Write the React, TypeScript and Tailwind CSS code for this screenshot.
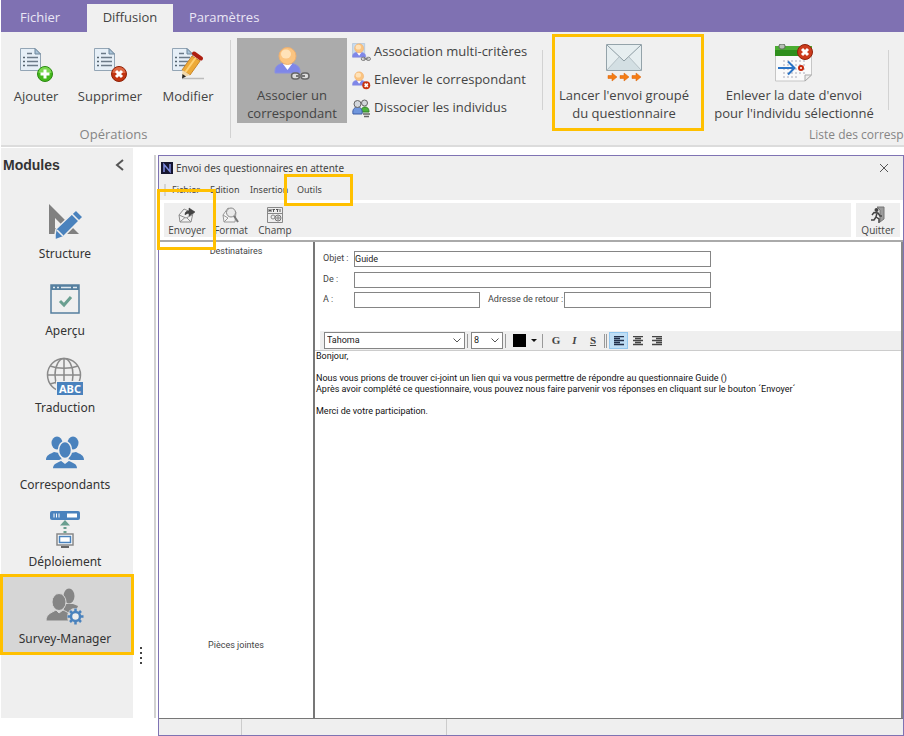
import { ReactNode } from "react";

type Kind = "add" | "remove" | "edit";

function DocumentIcon({ kind }: { kind: Kind }) {
  return (
    <svg width="36" height="36" viewBox="0 0 36 36" fill="none">
      <path d="M2.500 1.500H17L22.500 7V23.500H2.500Z" fill="#e6eff7" stroke="#93a5b5" />
      <path d="M17 1.500V7H22.500Z" fill="#a9c3d8" stroke="#6f879b" />
      <path d="M9 6.500H14M9 10.500H20M9 14.500H20M9 18.500H20" stroke="#6b7a88" strokeWidth="1.500" />
      <path d="M5 10.500H7M5 14.500H7M5 18.500H7" stroke="#56646f" strokeWidth="1.500" />
      {kind === "add" && (
        <g>
          <circle cx="27" cy="27" r="7.500" fill="#45b81c" stroke="#2b8a12" />
          <path d="M20.500 26a6.500 6 0 0 1 13 0Z" fill="#7bd750" />
          <path d="M27 22.500V31.500M22.500 27H31.500" stroke="#fff" strokeWidth="3" />
        </g>
      )}
      {kind === "remove" && (
        <g>
          <circle cx="27" cy="27" r="7.500" fill="#c23410" stroke="#8d2208" />
          <path d="M20.500 26a6.500 6 0 0 1 13 0Z" fill="#dd6743" />
          <path d="M24 24L30 30M30 24L24 30" stroke="#fff" strokeWidth="3" />
        </g>
      )}
      {kind === "edit" && (
        <g>
          <path d="M12 31.500H34" stroke="#bcbcbc" strokeWidth="1.500" />
          <path d="M22 9L30 14L20 28L12 23Z" fill="#edaa38" stroke="#ca872a" />
          <path d="M25.500 11L15.500 25" stroke="#ffd173" strokeWidth="2" />
          <path d="M12.500 23L20 28L12 31Z" fill="#f2d8aa" />
          <path d="M12.500 27L16 29.500L12 31.500Z" fill="#222" />
          <path d="M24 6.500L31 11.500" stroke="#ad1e10" strokeWidth="4" strokeLinecap="round" />
        </g>
      )}
    </svg>
  );
}

function PersonIcon({ size, kind }: { size: number; kind: "link" | "card" | "remove" }) {
  return (
    <svg width={size} height={size} viewBox="0 0 36 36" fill="none">
      {kind === "card" && <path d="M1 1H24V26H1Z" fill="#c9dcee" stroke="#9db7cf" />}
      <path d="M1 25C1 19 7 17 13 17S26 19 26 25V27H1Z" fill="#7f87e8" stroke="#8a90e0" />
      <path d="M9 18L13.500 24L18 18Z" fill="#fff" />
      <circle cx="13.500" cy="10" r="8.500" fill="#fbc480" stroke="#eeb070" />
      <ellipse cx="12" cy="8" rx="5" ry="4.500" fill="#ffe2b8" />
      {kind === "remove" ? (
        <g>
          <circle cx="27" cy="27" r="7.500" fill="#c8320f" />
          <path d="M24 24L30 30M30 24L24 30" stroke="#fff" strokeWidth="3" />
        </g>
      ) : (
        <g>
          <rect x="17.500" y="27" width="8" height="6" rx="3" fill="#ddd" stroke="#666" strokeWidth="1.500" />
          <rect x="27" y="27" width="8" height="6" rx="3" fill="#ddd" stroke="#666" strokeWidth="1.500" />
          <path d="M22 30H31" stroke="#777" strokeWidth="2" />
        </g>
      )}
    </svg>
  );
}

function PeopleIcon() {
  return (
    <svg width="19" height="19" viewBox="0 0 19 19" fill="none">
      <path d="M9 13C9 9 11 8 13 8S17 9 17 13Z" fill="#4cb43a" stroke="#317d28" />
      <circle cx="12.500" cy="4" r="3" fill="#d3d7dc" stroke="#666" />
      <path d="M1 15C0 10 3 8 5.500 8S11 10 10 15Z" fill="#6f96dd" stroke="#3d5da4" />
      <circle cx="5.500" cy="5" r="3.500" fill="#d3d7dc" stroke="#666" />
      <path d="M11 15H18M12 17.500H17" stroke="#666" strokeWidth="1.500" />
    </svg>
  );
}

function MailIcon() {
  return (
    <svg width="36" height="38" viewBox="0 0 36 38" fill="none">
      <path d="M.5.500H35.500V26.500H.5Z" fill="#e6eef0" stroke="#94a3aa" />
      <path d="M1 26L13 13L18 17L23 13L35 26Z" fill="#d3dfe3" />
      <path d="M1 1L18 17L35 1" stroke="#8d9ca3" />
      <path d="M1 26L13 13M35 26L23 13" stroke="#b5c1c6" />
      <path
        d="M2 31.500H6V29L11 33L6 37V34.500H2ZM14 31.500H18V29L23 33L18 37V34.500H14ZM26 31.500H30V29L35 33L30 37V34.500H26Z"
        fill="#f47c14"
        stroke="#dd6206"
        strokeWidth=".5"
      />
    </svg>
  );
}

function CalendarIcon() {
  return (
    <svg width="40" height="38" viewBox="0 0 40 38" fill="none">
      <path d="M1.500 3H37.500V31L31 37H1.500Z" fill="#fafafa" stroke="#c6c6c6" />
      <path d="M1 2H38V12H1Z" fill="#2f8f1d" />
      <path d="M1 2H38V6H1Z" fill="#4bad32" />
      <rect x="5" y="0" width="6" height="5" rx="2" fill="#b6beb4" stroke="#5b6a58" />
      <path d="M9 17H31M9 21H31M9 25H31M9 29H31M9 33H24" stroke="#d2d2da" strokeWidth="2" strokeDasharray="2 2" />
      <path d="M4 24H20M14 17.500L20.500 24L14 30.500" stroke="#2b74c6" strokeWidth="2" />
      <circle cx="27" cy="24" r="2" fill="#fff" stroke="#c8280c" strokeWidth="2" />
      <path d="M31 37V31H37.500Z" fill="#eee" stroke="#aaa" />
      <circle cx="31" cy="8" r="7.500" fill="#cc3b1c" stroke="#8f220b" />
      <path d="M28 5L34 11M34 5L28 11" stroke="#fff" strokeWidth="3" />
    </svg>
  );
}

function StructureIcon() {
  return (
    <svg width="40" height="38" viewBox="0 0 40 38">
      <path d="M4 1L34 31H4ZM10 15V25H20Z" fill="#808080" fillRule="evenodd" />
      <path d="M10 32L11 26L31 7L38 14L18 34L10 37Z" fill="#4a82bd" stroke="#efefef" strokeWidth="1.500" />
      <path d="M27 11L34 18M12 27L18 33" stroke="#efefef" strokeWidth="1.500" />
    </svg>
  );
}

function PreviewIcon() {
  return (
    <svg width="30" height="30" viewBox="0 0 30 30" fill="none">
      <path d="M1 1H29V29H1Z" stroke="#557f9f" strokeWidth="1.500" />
      <path d="M1 1H29V6H1Z" fill="#557f9f" />
      <path d="M3 3.500H5M7 3.500H9M11 3.500H21M23 3.500H27" stroke="#dfe8ef" strokeWidth="1.500" />
      <path d="M10 17L14 21L21 13" stroke="#6a9f90" strokeWidth="3" />
    </svg>
  );
}

function TranslationIcon() {
  return (
    <svg width="40" height="40" viewBox="0 0 40 40" fill="none">
      <g stroke="#8a8a8a" strokeWidth="1.500">
        <circle cx="19" cy="19" r="16.500" />
        <ellipse cx="19" cy="19" rx="9" ry="16.500" />
        <path d="M19 2V36M2.500 19H35.500M5 10C13 13 25 13 33 10M5 28C13 25 25 25 33 28" />
      </g>
      <rect x="11" y="25" width="28" height="15" fill="#efefef" />
      <rect x="12" y="26" width="26" height="13" fill="#4a82bd" />
      <text x="25" y="37" textAnchor="middle" fill="#fff" fontSize="11" fontWeight="700" fontFamily="Noto Sans, sans-serif">
        ABC
      </text>
    </svg>
  );
}

function CorrespondentsIcon() {
  return (
    <svg width="40" height="34" viewBox="0 0 40 34" fill="#4a82bd">
      <ellipse cx="12" cy="7" rx="5.500" ry="6.500" />
      <ellipse cx="28" cy="7" rx="5.500" ry="6.500" />
      <path d="M1 24C1 19 5 18 9 16L14 17L17 24ZM39 24C39 19 35 18 31 16L26 17L23 24Z" />
      <g stroke="#efefef" strokeWidth="1.500">
        <ellipse cx="20" cy="14" rx="6.500" ry="8.500" />
        <path d="M7 33C7 27 12 26 16 24L20 27L24 24C28 26 33 27 33 33Z" />
      </g>
    </svg>
  );
}

function DeploymentIcon() {
  return (
    <svg width="32" height="38" viewBox="0 0 32 38" fill="none">
      <rect x="1" y="0" width="30" height="9" rx="2" fill="#4a82bd" />
      <path d="M18 2.500H28V6.500H18Z" fill="#fff" />
      <path d="M5 2.500V6.500M7.500 2.500V6.500M10 2.500V6.500" stroke="#fff" />
      <path d="M16 9L21 14.500H11Z" fill="#6a9f90" />
      <path d="M16 16V22" stroke="#6a9f90" strokeWidth="3" strokeDasharray="2 2" />
      <path d="M8 23H24V34H8Z" fill="#fff" stroke="#888" strokeWidth="1.500" />
      <path d="M10.500 25.500H21.500V31.500H10.500Z" stroke="#4a82bd" strokeWidth="1.500" />
      <path d="M12 36H20" stroke="#666" strokeWidth="2" />
    </svg>
  );
}

function SurveyIcon() {
  return (
    <svg width="40" height="38" viewBox="0 0 40 38" fill="#858585">
      <ellipse cx="24" cy="8" rx="5.500" ry="7.500" />
      <path d="M20 16H28L33 18L30 25H18Z" />
      <g stroke="#d6d6d6">
        <ellipse cx="14" cy="14" rx="7" ry="8.500" />
        <path d="M1 33C1 26 6 25 11 22L14 25L18 22C22 24 26 25 27 33Z" />
      </g>
      <circle cx="30.500" cy="28.500" r="8.500" fill="#d6d6d6" />
      <circle cx="30.500" cy="28.500" r="4.500" fill="#eee" stroke="#4a82bd" strokeWidth="2.500" />
      <path
        d="M30.500 20.500V24M30.500 33V36.500M22.500 28.500H26M35 28.500H38.500M25 23L27.500 25.500M33.500 31.500L36 34M36 23L33.500 25.500M27.500 31.500L25 34"
        stroke="#4a82bd"
        strokeWidth="2.500"
      />
    </svg>
  );
}

function SendIcon() {
  return (
    <svg width="18" height="18" viewBox="0 0 18 18" fill="none" stroke="#8d8d8d">
      <path d="M1 9L6 3L15 7L13 16H2Z" fill="#f2f2f2" />
      <path d="M1 9L8 12L14 9M2 16L7 11.500M13 16L9 12" />
      <path d="M7 9C7 6 8 5 11 5V2L17 6L11 10V7.500C9 7.500 8 8 7 9Z" fill="#444" stroke="#333" strokeWidth=".5" />
    </svg>
  );
}

function FormatIcon() {
  return (
    <svg width="18" height="18" viewBox="0 0 18 18" fill="none" stroke="#999">
      <path d="M1 9L6 2L14 6L13 16H2Z" fill="#f4f4f4" />
      <path d="M2 16L6 12M1 9L6 12" />
      <circle cx="9" cy="6.500" r="4.500" fill="#e9e9e9" stroke="#888" />
      <path d="M12 10L16 16" stroke="#777" strokeWidth="2" />
    </svg>
  );
}

function FieldIcon() {
  return (
    <svg width="18" height="18" viewBox="0 0 18 18" fill="none" stroke="#888">
      <path d="M1.500 1.500H16.500V16.500H1.500Z" fill="#eee" />
      <path d="M3 3V6M5 3V6M3 4.500H5M6.500 3.500H9M7.500 3.500V6M10 3.500H12.500M11.500 3.500V6M14 3V6" stroke="#555" />
      <path d="M1.500 7.500H16.500" />
      <circle cx="7" cy="11" r="2" />
      <circle cx="12" cy="12" r="3" fill="#ddd" stroke="#777" />
      <path d="M12 10V14M10 12H14" />
    </svg>
  );
}

function QuitIcon() {
  return (
    <svg width="16" height="18" viewBox="0 0 16 18" fill="none">
      <path d="M7 1H14V13L10 16V4Z" fill="#9b9b9b" stroke="#777" />
      <circle cx="6.500" cy="4" r="2" fill="#444" />
      <path d="M2 9L4 6.500L8 7L10 10H12M7 7L6 11L9 13V17M6 11L4 14H1" stroke="#444" strokeWidth="1.500" />
    </svg>
  );
}

function AlignIcon({ lines }: { lines: string }) {
  return (
    <svg width="10" height="10" viewBox="0 0 10 10" stroke="currentColor" strokeWidth="1.500">
      <path d={lines} />
    </svg>
  );
}

function Chevron() {
  return (
    <svg className="pointer-events-none absolute right-1 top-1.5" width="8" height="5" viewBox="0 0 8 5" fill="none" stroke="#555">
      <path d="M.5.500L4 4L7.500.500" />
    </svg>
  );
}

// Cadre jaune posé par-dessus une zone
function Highlight({ className }: { className: string }) {
  return <span className={`pointer-events-none absolute z-10 border-3 border-[#ffc000] ${className}`} />;
}

function RibbonButton({ icon, label, className }: { icon: ReactNode; label: string; className: string }) {
  return (
    <button type="button" className={`flex shrink-0 flex-col items-center whitespace-pre ${className}`}>
      {icon}
      <span className="mt-1 leading-[18px]">{label}</span>
    </button>
  );
}

function ToolButton({ icon, label }: { icon: ReactNode; label: string }) {
  return (
    <button type="button" className="flex w-11 flex-col items-center pt-[3px]">
      {icon}
      <span className="font-['Open_Sans',sans-serif] text-[10px] leading-3">{label}</span>
    </button>
  );
}

const modules = [
  { label: "Structure", icon: <StructureIcon /> },
  { label: "Aperçu", icon: <PreviewIcon /> },
  { label: "Traduction", icon: <TranslationIcon /> },
  { label: "Correspondants", icon: <CorrespondentsIcon /> },
  { label: "Déploiement", icon: <DeploymentIcon /> },
  { label: "Survey-Manager", icon: <SurveyIcon />, active: true },
];

const associations = [
  { label: "Association multi-critères", icon: <PersonIcon size={19} kind="card" /> },
  { label: "Enlever le correspondant", icon: <PersonIcon size={19} kind="remove" /> },
  { label: "Dissocier les individus", icon: <PeopleIcon /> },
];

const message = `Bonjour,

Nous vous prions de trouver ci-joint un lien qui va vous permettre de répondre au questionnaire Guide ()
Après avoir complété ce questionnaire, vous pouvez nous faire parvenir vos réponses en cliquant sur le bouton ´Envoyer´

Merci de votre participation.`;

function Ribbon() {
  return (
    <header className="ml-px font-['Open_Sans',sans-serif] text-[13px] text-[#444]">
      <nav className="flex h-8 items-end bg-[#7f71b2] text-[#eae6f5]">
        <button type="button" className="h-7 w-[86px] pr-2">Fichier</button>
        <button type="button" className="h-7 w-[86px] bg-[#f0f0f0] text-[#444]">Diffusion</button>
        <button type="button" className="h-7 px-4">Paramètres</button>
      </nav>
      <div className="flex h-[115px] overflow-hidden border-b-2 border-[#dcdcdc] bg-[#f0f0f0]">
        <section className="flex w-[229px] shrink-0 flex-col">
          <div className="flex pt-[15px]">
            <RibbonButton className="w-[70px]" icon={<DocumentIcon kind="add" />} label="Ajouter" />
            <RibbonButton className="w-[78px]" icon={<DocumentIcon kind="remove" />} label="Supprimer" />
            <RibbonButton className="w-[78px]" icon={<DocumentIcon kind="edit" />} label="Modifier" />
          </div>
          <h2 className="mt-5 pr-1 text-center text-[#858585]">Opérations</h2>
        </section>
        <div className="mt-2 h-[98px] w-px shrink-0 bg-[#d2d2d2]" />
        <section className="flex shrink-0 flex-col">
          <div className="flex h-[94px] pt-1.5">
            <RibbonButton
              className="ml-1.5 h-[85px] w-[110px] bg-[#ababab] pt-2"
              icon={<PersonIcon size={36} kind="link" />}
              label={"Associer un\ncorrespondant"}
            />
            <ul className="ml-[5px] w-[190px] shrink-0">
              {associations.map((a) => (
                <li key={a.label} className="h-7">
                  <button type="button" className="flex h-7 items-center gap-[3px] whitespace-nowrap">
                    {a.icon}
                    {a.label}
                  </button>
                </li>
              ))}
            </ul>
            <div className="mt-3 h-[60px] w-px shrink-0 bg-[#d2d2d2]" />
            <div className="relative ml-[9px]">
              <RibbonButton className="w-[152px] pr-2 pt-1.5" icon={<MailIcon />} label={"Lancer l'envoi groupé\ndu questionnaire"} />
              <Highlight className="inset-x-0 -top-1 h-[97px]" />
            </div>
            <RibbonButton
              className="w-[180px] pt-1.5"
              icon={<CalendarIcon />}
              label={"Enlever la date d'envoi\npour l'individu sélectionné"}
            />
            <div className="ml-1 mt-3 h-[60px] w-px shrink-0 bg-[#d2d2d2]" />
          </div>
          <h2 className="self-end whitespace-nowrap text-[12px] text-[#858585]">
            <span className="block w-20">Liste des correspondants</span>
          </h2>
        </section>
      </div>
    </header>
  );
}

function Sidebar() {
  return (
    <aside className="mb-[18px] ml-px mt-px w-[132px] shrink-0 bg-[#efefef] text-[#333]">
      <div className="flex h-[43px] items-start justify-between pl-0.5 pr-2 pt-2">
        <h2 className="font-['Liberation_Sans',sans-serif] text-[14px] font-bold leading-[18px]">Modules</h2>
        <button type="button" aria-label="Réduire">
          <svg width="11" height="18" viewBox="0 0 11 18" fill="none" stroke="#555" strokeWidth="2">
            <path d="M9 4L3 9L9 14" />
          </svg>
        </button>
      </div>
      {modules.map((m) => (
        <div key={m.label} className="relative">
          <button
            type="button"
            className={`flex h-[77px] w-full flex-col items-center pr-1 text-[12px] ${m.active ? "bg-[#d6d6d6]" : ""}`}
          >
            <span className="flex h-[54px] items-center pt-2">{m.icon}</span>
            <span className="leading-[18px]">{m.label}</span>
          </button>
          {m.active && <Highlight className="-inset-x-px -inset-y-0.5" />}
        </div>
      ))}
    </aside>
  );
}

const inputStyle = "h-4 border border-[#858585] bg-white text-[9px] text-[#222] outline-none";

function MailForm() {
  return (
    <form className="flex flex-col pb-[23px] pl-2 pr-2 pt-[9px] font-['Roboto',sans-serif] text-[9px] text-[#444]">
      <div className="flex max-w-[388px] items-center">
        <label htmlFor="objet" className="w-[31px]">Objet :</label>
        <input id="objet" defaultValue="Guide" className={`flex-1 ${inputStyle}`} />
      </div>
      <div className="mt-[5px] flex max-w-[388px] items-center">
        <label htmlFor="de" className="w-[31px]">De :</label>
        <input id="de" className={`flex-1 ${inputStyle}`} />
      </div>
      <div className="mt-1 flex max-w-[388px] items-center">
        <label htmlFor="a" className="w-[31px]">A :</label>
        <input id="a" className={`w-[126px] ${inputStyle}`} />
        <label htmlFor="retour" className="ml-2 w-[76px] whitespace-nowrap">Adresse de retour :</label>
        <input id="retour" className={`w-0 flex-1 ${inputStyle}`} />
      </div>
    </form>
  );
}

function FormatBar() {
  return (
    <div className="ml-[5px] flex h-[19px] items-center bg-[#efefef] pl-1 font-['Roboto',sans-serif] text-[#444]">
      <div className="relative">
        <select aria-label="Police" className="block h-[17px] w-[141px] appearance-none border border-[#858585] bg-white px-0.5 text-[9px] text-[#222]">
          <option>Tahoma</option>
        </select>
        <Chevron />
      </div>
      <i className="ml-0.5 mr-[3px] h-3.5 w-px bg-[#999]" />
      <div className="relative">
        <select aria-label="Taille" className="block h-[17px] w-8 appearance-none border border-[#858585] bg-white px-0.5 text-[9px] text-[#222]">
          <option>8</option>
        </select>
        <Chevron />
      </div>
      <i className="ml-0.5 mr-[7px] h-3.5 w-px bg-[#999]" />
      <button type="button" aria-label="Couleur" className="flex items-center gap-[5px]">
        <span className="size-[13px] bg-black" />
        <svg width="6" height="3" viewBox="0 0 6 3">
          <path d="M0 0H6L3 3Z" fill="#111" />
        </svg>
      </button>
      <i className="ml-[5px] mr-1 h-3.5 w-px bg-[#999]" />
      <div className="flex font-['Liberation_Serif',serif] text-[11px] leading-none">
        <button type="button" className="w-[18px] font-bold">G</button>
        <button type="button" className="w-[19px] font-bold italic">I</button>
        <button type="button" className="w-[18px] font-bold underline">S</button>
      </div>
      <i className="mx-0.5 h-3.5 w-[3px] border-x border-[#999]" />
      <button type="button" aria-label="Gauche" className="flex h-[17px] w-[19px] items-center justify-center border border-[#92c6ee] bg-[#bfdef5] text-[#222f4a]">
        <AlignIcon lines="M0 .5H10M0 2.500H6M0 4.500H10M0 6.500H6M0 8.500H10" />
      </button>
      <button type="button" aria-label="Centre" className="flex h-[17px] w-[19px] items-center justify-center">
        <AlignIcon lines="M0 .5H10M2 2.500H8M0 4.500H10M2 6.500H8M0 8.500H10" />
      </button>
      <button type="button" aria-label="Droite" className="flex h-[17px] w-[19px] items-center justify-center">
        <AlignIcon lines="M0 .5H10M4 2.500H10M0 4.500H10M4 6.500H10M0 8.500H10" />
      </button>
    </div>
  );
}

function MailWindow() {
  return (
    <main className="mt-2 flex min-w-0 flex-1 flex-col border border-[#7f73b3] bg-white text-[#444]">
      <div className="bg-[#efefef]">
        <div className="flex h-6 items-center pl-0.5 pr-3.5">
          <svg width="12" height="12" viewBox="0 0 12 12">
            <path d="M0 0H12V12H0Z" fill="#15152f" />
            <path d="M3 10V2.500L9 9.500V2" stroke="#7d8be0" strokeWidth="1.500" fill="none" />
          </svg>
          <h1 className="ml-[3px] flex-1 text-[10px]">Envoi des questionnaires en attente</h1>
          <button type="button" aria-label="Fermer">
            <svg width="10" height="10" viewBox="0 0 10 10" stroke="#555">
              <path d="M1 1L9 9M9 1L1 9" />
            </svg>
          </button>
        </div>
        <nav className="flex h-5 items-center pl-[5px] text-[9px]">
          <i className="mr-1.5 h-3 w-0.5 bg-[#d4d4d4]" />
          <button type="button" className="w-[38px] text-left">Fichier</button>
          <button type="button" className="w-10 text-left">Edition</button>
          <button type="button" className="w-[47px] text-left">Insertion</button>
          <button type="button" className="relative">
            Outils
            <Highlight className="-left-[13px] -top-[9px] h-8 w-[69px]" />
          </button>
        </nav>
      </div>
      <div className="flex justify-between gap-[5px] border-b-2 border-[#aaa] pb-[3px] pl-[5px] pr-[3px] pt-[3px]">
        <div className="flex h-[34px] flex-1 bg-[#efefef] pl-px">
          <div className="relative">
            <ToolButton icon={<SendIcon />} label="Envoyer" />
            <Highlight className="-left-2 -top-3.5 h-[61px] w-[59px]" />
          </div>
          <ToolButton icon={<FormatIcon />} label="Format" />
          <ToolButton icon={<FieldIcon />} label="Champ" />
        </div>
        <div className="h-[34px] bg-[#efefef]">
          <ToolButton icon={<QuitIcon />} label="Quitter" />
        </div>
      </div>
      <div className="flex flex-1 border-b border-[#777]">
        <section className="flex w-[156px] shrink-0 flex-col border-r-2 border-[#777] text-center font-['Roboto',sans-serif] text-[9px] leading-3">
          <h2 className="flex-1 pt-[3px]">Destinataires</h2>
          <h2 className="h-[79px]">Pièces jointes</h2>
        </section>
        <section className="flex min-w-0 flex-1 flex-col border-r-2 border-[#888]">
          <MailForm />
          <FormatBar />
          <textarea
            aria-label="Message"
            className="flex-1 resize-none overflow-hidden whitespace-pre border-t border-[#ccc] bg-white pl-px font-['Roboto',sans-serif] text-[9px] leading-[11px] text-[#111] outline-none"
            defaultValue={message}
          />
        </section>
      </div>
      <footer className="flex h-4 bg-[#efefef]">
        <span className="w-[83px] border-r border-[#ccc]" />
        <span className="w-[205px] border-r border-[#ccc]" />
      </footer>
    </main>
  );
}

export default function App() {
  return (
    <div className="flex min-h-screen flex-col overflow-x-hidden bg-white font-['Noto_Sans',sans-serif]">
      <Ribbon />
      <div className="flex flex-1">
        <Sidebar />
        <div className="mb-[72px] flex w-[21px] shrink-0 flex-col items-center justify-end gap-[3px] pr-1.5">
          <i className="size-0.5 bg-[#444]" />
          <i className="size-0.5 bg-[#444]" />
          <i className="size-0.5 bg-[#444]" />
          <i className="size-0.5 bg-[#444]" />
        </div>
        <div className="mb-[18px] mr-0.5 mt-2 w-0.5 bg-[#d2d2d2]" />
        <MailWindow />
      </div>
    </div>
  );
}
